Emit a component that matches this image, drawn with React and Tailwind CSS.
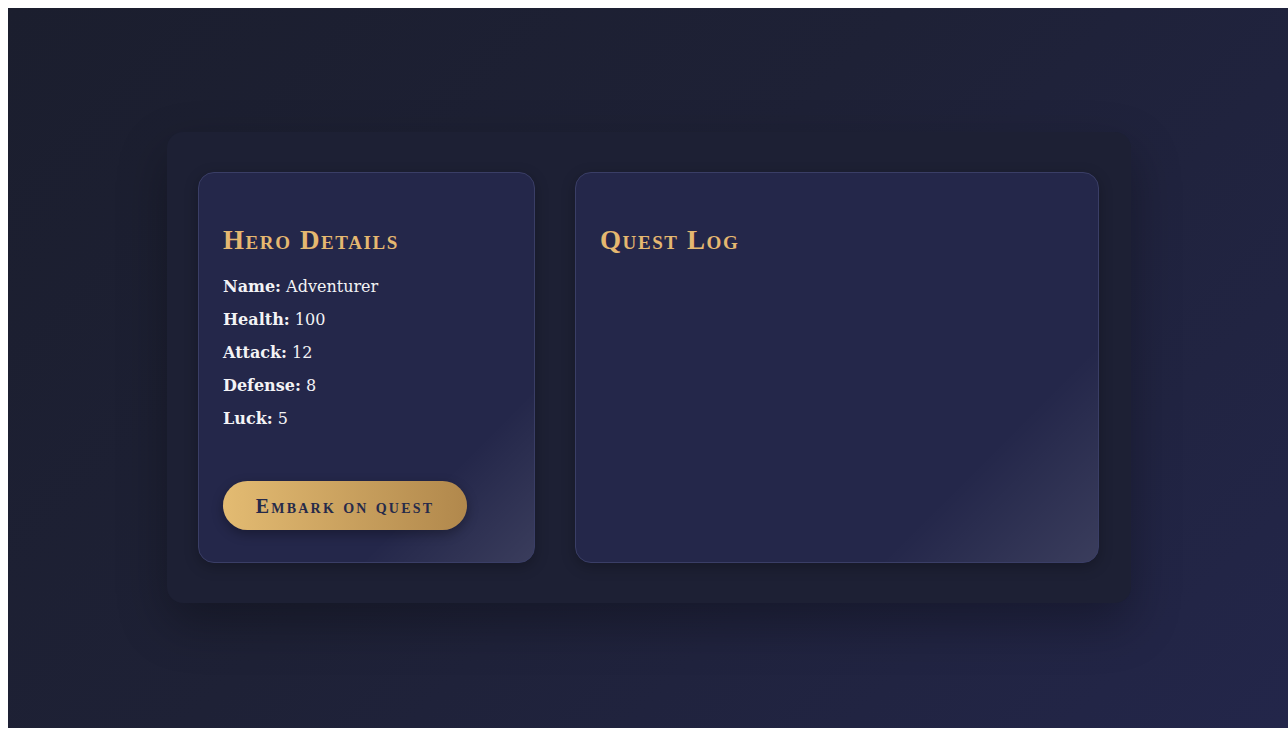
import React from 'react';

const hero = [
  { label: 'Name', value: 'Adventurer' },
  { label: 'Health', value: '100' },
  { label: 'Attack', value: '12' },
  { label: 'Defense', value: '8' },
  { label: 'Luck', value: '5' },
];

const headingFont = "[font-family:'Liberation_Serif',serif] [font-variant:small-caps]";

const Card = ({ className, children }) => (
  <div
    className={`rounded-2xl border border-[#3a3e66] bg-[#24274a] bg-[linear-gradient(135deg,transparent_76%,rgba(255,255,255,0.1))] shadow-[0_4px_14px_rgba(0,0,0,0.25)] ${className}`}
  >
    {children}
  </div>
);

const App = () => {
  return (
    <div className="bg-white pt-2 pl-2 pb-2 w-[1288px] h-[736px] overflow-hidden">
      <div className="w-[1280px] h-[720px] bg-[linear-gradient(135deg,#1b1e2e_0%,#1e2136_45%,#23264a_100%)] flex items-start pt-[124px] pl-[159px]">
        {/* Main panel */}
        <div className="w-[964px] h-[471px] rounded-2xl bg-[#1d2034] shadow-[0_20px_50px_rgba(0,0,0,0.3)] pl-[31px] pr-8 py-10 flex gap-10">
          {/* Hero details */}
          <Card className="w-[337px] px-6 pt-[52px] pb-8 flex flex-col">
            <h2 className={`${headingFont} text-[27px] leading-[30px] font-bold tracking-[1.6px] text-[#e5b870]`}>
              Hero Details
            </h2>
            <div className="mt-[21px] flex flex-col gap-[11px] [font-family:'DejaVu_Serif',serif] text-[16px] leading-[22px] text-[#f3f3f5]">
              {hero.map((row) => (
                <p key={row.label}>
                  <span className="font-bold">{row.label}:</span> {row.value}
                </p>
              ))}
            </div>
            <div className="mt-auto">
              <button className={`${headingFont} w-[244px] h-[49px] rounded-full bg-[linear-gradient(90deg,#e3bb72,#b1884c)] text-[#262a4a] text-[20px] font-bold tracking-[2.2px] shadow-[0_4px_12px_rgba(0,0,0,0.3)]`}>
                Embark on quest
              </button>
            </div>
          </Card>

          {/* Quest log */}
          <Card className="flex-1 px-6 pt-[52px] pb-8">
            <h2 className={`${headingFont} text-[27px] leading-[30px] font-bold tracking-[1.6px] text-[#e5b870]`}>
              Quest Log
            </h2>
          </Card>
        </div>
      </div>
    </div>
  );
};

export default App;
